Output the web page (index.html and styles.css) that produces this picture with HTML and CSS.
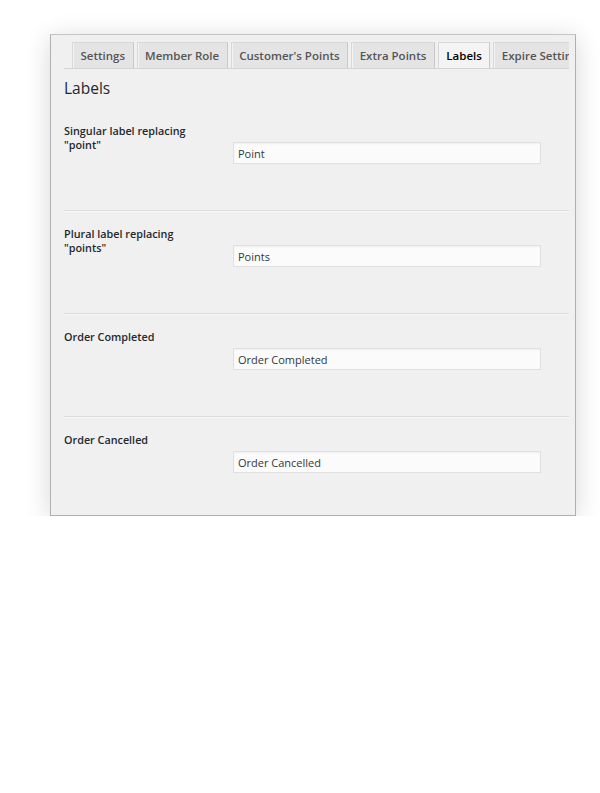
FILE: index.html
```html
<!DOCTYPE html>
<html lang="en">
<head>
<meta charset="utf-8">
<title>Labels</title>
<link rel="stylesheet" href="styles.css">
</head>
<body>
<div class="panel">
  <nav class="tabs">
    <span class="tab">Settings</span>
    <span class="tab">Member Role</span>
    <span class="tab">Customer's Points</span>
    <span class="tab">Extra Points</span>
    <span class="tab active">Labels</span>
    <span class="tab">Expire Settings</span>
  </nav>
  <h2 class="title">Labels</h2>
  <div class="row">
    <div class="label">Singular label replacing "point"</div>
    <div class="field"><input class="input" type="text" value="Point"></div>
  </div>
  <div class="row">
    <div class="label">Plural label replacing "points"</div>
    <div class="field"><input class="input" type="text" value="Points"></div>
  </div>
  <div class="row">
    <div class="label">Order Completed</div>
    <div class="field"><input class="input" type="text" value="Order Completed"></div>
  </div>
  <div class="row last">
    <div class="label">Order Cancelled</div>
    <div class="field"><input class="input" type="text" value="Order Cancelled"></div>
  </div>
</div>
</body>
</html>
```
FILE: styles.css
```css
html, body {
  margin: 0;
  padding: 0;
  background: #ffffff;
}
body {
  font-family: "Open Sans", "Noto Sans", sans-serif;
  color: #23282d;
}
.panel {
  box-sizing: border-box;
  margin: 34px 0 0 50px;
  width: 526px;
  height: 482px;
  background: #f0f0f0;
  border: 1px solid #b0b0b0;
  border-top-color: #c4c4c4;
  box-shadow: 0 4px 24px rgba(0, 0, 0, 0.16);
  padding: 7px 6px 0 13px;
}
.tabs {
  display: flex;
  white-space: nowrap;
  overflow: hidden;
  padding-left: 8px;
  border-bottom: 1px solid #d4d4d4;
  height: 26px;
}
.tab {
  flex: none;
  box-sizing: border-box;
  height: 26px;
  line-height: 25px;
  padding: 0 7.5px;
  margin-right: 3px;
  font-size: 11.5px;
  font-weight: 600;
  color: #555555;
  background: #e4e4e4;
  border: 1px solid #d8d8d8;
  border-bottom: none;
  border-right-color: #c8c8c8;
  box-shadow: inset 1px 0 0 #f4f4f4;
}
.tab.active {
  background: #f4f4f4;
  color: #000000;
  height: 27px;
  margin-bottom: -1px;
}
.title {
  margin: 9px 0 10px;
  font-size: 15.5px;
  line-height: 20px;
  font-weight: 400;
  color: #23282d;
}
.row {
  display: flex;
  padding: 16px 0 46px;
  border-bottom: 1px solid #dcdcdc;
  box-shadow: 0 1px 0 #f8f8f8;
}
.row.last {
  border-bottom: none;
  box-shadow: none;
}
.label {
  box-sizing: border-box;
  width: 169px;
  padding-right: 40px;
  font-size: 10.8px;
  line-height: 14px;
  font-weight: 600;
  color: #23282d;
}
.field {
  padding-top: 18px;
}
.input {
  display: block;
  box-sizing: border-box;
  width: 308px;
  height: 22px;
  margin: 0;
  padding: 0 4px;
  font-family: "Open Sans", "Noto Sans", sans-serif;
  font-size: 11px;
  color: #32373c;
  background: #fbfbfb;
  border: 1px solid #e0e0e0;
  box-shadow: inset 0 1px 2px rgba(0, 0, 0, 0.05);
  outline: none;
}
```
